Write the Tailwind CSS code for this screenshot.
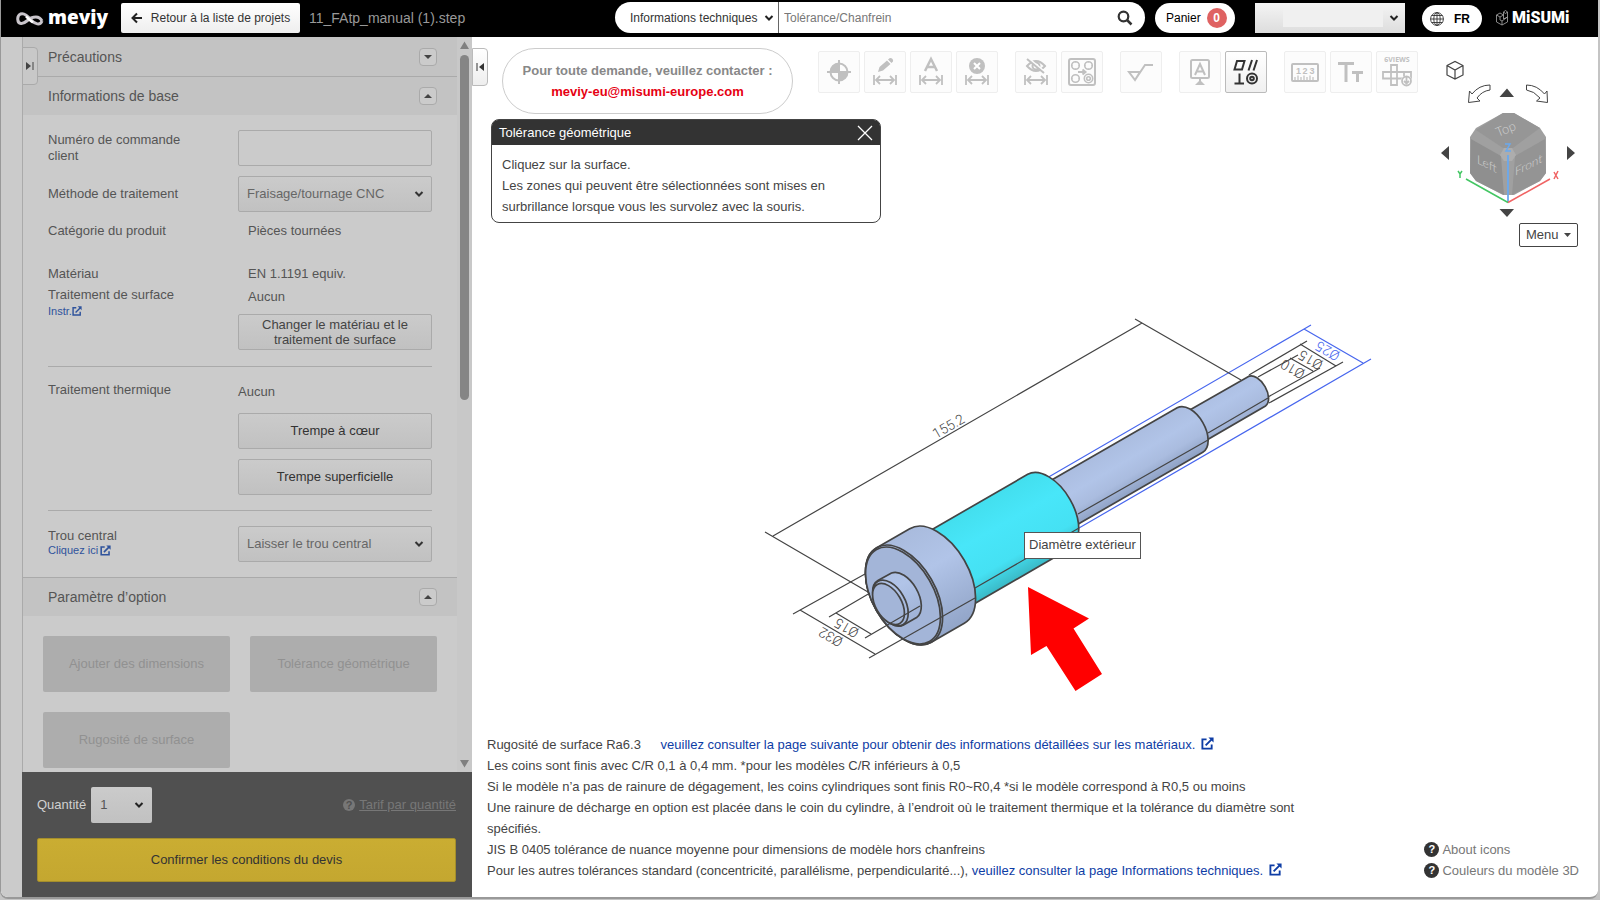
<!DOCTYPE html>
<html lang="fr">
  <head>
    <meta charset="UTF-8" />
    <meta name="viewport" content="width=device-width, initial-scale=1.0" />
    <title>meviy</title>
    <script src="https://cdn.jsdelivr.net/npm/@tailwindcss/browser@4"></script>
  </head>
  <body class="h-screen pb-px bg-[#c4c4c4] font-['Liberation_Sans',Arial,sans-serif] text-[13px] text-[#444]">
    <!-- Shared icons -->
    <svg class="hidden">
      <symbol id="chevron" viewBox="0 0 10 8">
        <path d="M1.5 2 L5 5.5 L8.500 2" fill="none" stroke="currentColor" stroke-width="2" />
      </symbol>
      <symbol id="external" viewBox="0 0 14 14">
        <path d="M6 2.500H1.500V12.500H11.500V8M5 9L12 2" fill="none" stroke="currentColor" stroke-width="2" />
        <path d="M8 0.500H13.500V6Z" fill="currentColor" />
      </symbol>
      <symbol id="width" viewBox="0 0 24 12">
        <path d="M1 1V11M23 1V11M3 6H21M7 2L3 6L7 10M17 2L21 6L17 10" fill="none" stroke="currentColor" stroke-width="1.8" />
      </symbol>
    </svg>

    <div class="flex flex-col h-full mr-0.5 rounded-b-lg overflow-hidden border-l border-b-2 border-[#999] bg-white">
      <!-- Header -->
      <header class="flex items-center h-[37px] shrink-0 bg-black text-xs">
        <a href="#" class="flex items-center gap-1 ml-[15px] w-[105px] text-white">
          <svg class="w-7 h-4" viewBox="0 0 28 16">
            <path d="M26 10C24 15 19 13 15 9C11 4 8 1.500 4.500 3C0.500 5 1 12 5 12.500C9 13 11 9 15 7C20 5 24 6 26 10" fill="none" stroke="#c9c5cb" stroke-width="3" />
            <path d="M10 5.500C12 7 14 9.500 17 11.500" fill="none" stroke="#fff" stroke-width="2.500" />
          </svg>
          <span class="font-['Open_Sans',sans-serif] font-extrabold text-[19px] leading-6 -mt-1">meviy</span>
        </a>
        <button class="flex items-center justify-center gap-2 w-[179px] h-[30px] -mt-0.5 rounded-xs bg-linear-to-b from-white to-[#eee] text-[#333]">
          <svg class="w-3 h-3" viewBox="0 0 12 12"><path d="M11 6H2M6 1.500L1.500 6L6 10.500" fill="none" stroke="#222" stroke-width="2" /></svg>
          Retour à la liste de projets
        </button>
        <span class="ml-[9px] -mt-0.5 text-sm text-[#999]">11_FAtp_manual (1).step</span>

        <div class="flex items-center ml-auto mr-7 h-full pb-0.5">
          <form class="flex items-center w-[530px] h-[31px] rounded-full bg-white overflow-hidden">
            <label class="relative flex items-center w-[164px] h-full border-r border-[#666]">
              <select aria-label="Catégorie" class="appearance-none w-full h-full pl-[15px] text-[#333] outline-none">
                <option>Informations techniques</option>
              </select>
              <svg class="absolute right-1 w-2.5 h-2 text-[#222] pointer-events-none"><use href="#chevron" /></svg>
            </label>
            <input aria-label="Recherche" placeholder="Tolérance/Chanfrein" class="flex-1 pl-[5px] outline-none placeholder:text-[#777]" />
            <button type="button" aria-label="Rechercher" class="mr-3">
              <svg class="w-4 h-4" viewBox="0 0 16 16"><circle cx="6.500" cy="6.500" r="4.800" fill="none" stroke="#333" stroke-width="2.200" /><path d="M10 10L14.500 14.500" stroke="#333" stroke-width="2.500" /></svg>
            </button>
          </form>
          <button class="flex items-center gap-1.5 ml-2.5 w-20 h-[30px] pl-[11px] rounded-full bg-white text-black">
            Panier
            <span class="w-5 h-5 rounded-full bg-[#df6262] font-bold leading-5 text-white text-center">0</span>
          </button>
          <label class="relative flex items-center ml-5 w-[150px] h-[30px]">
            <select aria-label="Compte" class="appearance-none w-full h-full bg-linear-to-b from-[#f4f4f4] to-[#ddd]"><option></option></select>
            <span class="absolute left-7 w-[100px] h-[19px] bg-[#f0f0f0]"></span>
            <svg class="absolute right-1.5 w-2.5 h-2 text-[#222] pointer-events-none"><use href="#chevron" /></svg>
          </label>
          <button class="flex items-center gap-2.5 ml-[17px] mt-0.5 w-[60px] h-[27px] pl-2 rounded-full bg-white text-black font-bold text-xs">
            <svg class="w-3.5 h-3.5" viewBox="0 0 14 14" fill="none" stroke="#333" stroke-width="0.900"><circle cx="7" cy="7" r="6.400" /><ellipse cx="7" cy="7" rx="3.200" ry="6.400" /><path d="M7 0.500V13.500M0.500 7H13.500M1.500 3.500H12.500M1.500 10.500H12.500" /></svg>
            FR
          </button>
          <a href="#" class="flex items-center gap-1 ml-3.5 w-[74px] text-white">
            <svg class="w-3 h-4 shrink-0" viewBox="0 0 12 16" fill="none" stroke="#aaa" stroke-width="0.800"><path d="M0.500 5L4 3L7.500 5V9L11.500 7V12L6 15L0.500 12ZM0.500 5L4 7V10L6 11V15M4 7L7.500 5L7.500 2L9.500 0.500L11.500 2V7M6 11L11.500 7M7.500 2L9.500 3.500L11.500 2" /></svg>
            <span class="font-[Roboto,sans-serif] font-black text-base leading-5">MiSUMi</span>
          </a>
        </div>
      </header>

      <div class="flex flex-1 min-h-0">
        <!-- Sidebar -->
        <aside class="flex flex-col w-[450px] ml-[21px] shrink-0 relative before:absolute before:-left-[21px] before:w-[21px] before:h-full before:bg-[#cbcbcb] text-[#555]">
          <button aria-label="Ouvrir" class="absolute left-0 top-2.5 z-10 flex items-center justify-center w-4 h-[38px] rounded-r-sm border border-[#aaa] bg-[#c8c8c8]">
            <svg class="w-2 h-2" viewBox="0 0 8 8"><path d="M0 0L5 4L0 8Z" fill="#444" /><path d="M7 0V8" stroke="#444" /></svg>
          </button>
          <div class="flex flex-1 min-h-0 bg-[#cbcbcb]">
            <div class="flex-1 overflow-hidden border-l border-[#aaa]">
              <h2 class="flex items-center justify-between h-10 pl-[25px] pr-5 border-b border-[#aaa] bg-[#c3c3c3] text-sm">
                Précautions
                <button aria-label="Déplier" class="flex items-center justify-center w-[18px] h-[18px] rounded-sm border border-[#aaa] bg-[#cbcbcb]"><svg class="w-2 h-1" viewBox="0 0 8 4"><path d="M0 0H8L4 4Z" fill="#444" /></svg></button>
              </h2>
              <h2 class="flex items-center justify-between h-[38px] pl-[25px] pr-5 bg-[#c3c3c3] text-sm">
                Informations de base
                <button aria-label="Replier" class="flex items-center justify-center w-[18px] h-[18px] rounded-sm border border-[#aaa] bg-[#cbcbcb]"><svg class="w-2 h-1" viewBox="0 0 8 4"><path d="M0 4H8L4 0Z" fill="#444" /></svg></button>
              </h2>

              <div class="mx-[25px]">
                <div class="grid grid-cols-[1fr_194px] pt-[15px] gap-y-2.5 items-center">
                  <label for="order-number" class="leading-4 pr-10">Numéro de commande client</label>
                  <input id="order-number" class="h-9 rounded-xs border border-[#aaa] bg-[#cbcbcb]" />
                  <label for="method">Méthode de traitement</label>
                  <div class="relative flex items-center h-9">
                    <select id="method" class="appearance-none w-full h-full pl-2 rounded-xs border border-[#aaa] bg-linear-to-b from-[#cbcbcb] to-[#c1c1c1] text-[#666]"><option>Fraisage/tournage CNC</option></select>
                    <svg class="absolute right-2 w-2.5 h-2 text-[#333] pointer-events-none"><use href="#chevron" /></svg>
                  </div>
                </div>
                <dl class="grid grid-cols-[1fr_184px] leading-5 pt-[9px]">
                  <dt>Catégorie du produit</dt>
                  <dd>Pièces tournées</dd>
                  <dt class="mt-[23px]">Matériau</dt>
                  <dd class="mt-[23px]">EN 1.1191 equiv.</dd>
                </dl>
                <div class="grid grid-cols-[1fr_194px] leading-5 pb-4 pt-px border-b border-[#aaa]">
                  <div>
                    <p>Traitement de surface</p>
                    <a href="#" class="flex items-center text-[11px] leading-3 text-[#2f539c]">Instr.<svg class="w-2.5 h-2.5"><use href="#external" /></svg></a>
                  </div>
                  <div>
                    <p class="pl-2.5 pt-0.5">Aucun</p>
                    <button class="mt-[7px] w-full h-9 rounded-xs border border-[#aaa] bg-linear-to-b from-[#cbcbcb] to-[#c1c1c1] leading-[15px] text-[#444]">Changer le matériau et le<br />traitement de surface</button>
                  </div>
                </div>
                <div class="grid grid-cols-[1fr_194px] leading-5 pt-[13px] pb-[15px] border-b border-[#aaa]">
                  <p>Traitement thermique</p>
                  <div class="flex flex-col gap-2.5">
                    <p class="pt-0.5 pb-px">Aucun</p>
                    <button class="h-9 rounded-xs border border-[#aaa] bg-linear-to-b from-[#cbcbcb] to-[#c1c1c1] text-[#333]">Trempe à cœur</button>
                    <button class="h-9 rounded-xs border border-[#aaa] bg-linear-to-b from-[#cbcbcb] to-[#c1c1c1] text-[#333]">Trempe superficielle</button>
                  </div>
                </div>
                <div class="grid grid-cols-[1fr_194px] py-[15px]">
                  <div class="leading-4 pt-0.5">
                    <label for="center-hole">Trou central</label>
                    <a href="#" class="flex items-center gap-0.5 text-[11px] leading-3 text-[#2f539c]">Cliquez ici<svg class="w-[11px] h-[11px]"><use href="#external" /></svg></a>
                  </div>
                  <div class="relative flex items-center h-9">
                    <select id="center-hole" class="appearance-none w-full h-full pl-2 rounded-xs border border-[#aaa] bg-linear-to-b from-[#cbcbcb] to-[#c1c1c1] text-[#666]"><option>Laisser le trou central</option></select>
                    <svg class="absolute right-2 w-2.5 h-2 text-[#333] pointer-events-none"><use href="#chevron" /></svg>
                  </div>
                </div>
              </div>

              <h2 class="flex items-center justify-between h-[39px] pl-[25px] pr-5 border-t border-[#aaa] bg-[#c3c3c3] text-sm">
                Paramètre d’option
                <button aria-label="Replier" class="flex items-center justify-center w-[18px] h-[18px] rounded-sm border border-[#aaa] bg-[#cbcbcb]"><svg class="w-2 h-1" viewBox="0 0 8 4"><path d="M0 4H8L4 0Z" fill="#444" /></svg></button>
              </h2>
              <div class="grid grid-cols-2 gap-5 px-5 pt-5">
                <button disabled class="h-14 rounded-xs bg-[#adadad] text-[#919191]">Ajouter des dimensions</button>
                <button disabled class="h-14 rounded-xs bg-[#adadad] text-[#919191]">Tolérance géométrique</button>
                <button disabled class="h-14 rounded-xs bg-[#adadad] text-[#919191]">Rugosité de surface</button>
              </div>
            </div>
            <!-- Scrollbar -->
            <div class="flex flex-col items-center w-[15px] py-1 bg-[#c8c8c8]">
              <svg class="w-[9px] h-2 shrink-0" viewBox="0 0 9 8"><path d="M4.500 0.500L9 8H0Z" fill="#808080" /></svg>
              <div class="mt-1.5 w-[9px] h-[345px] rounded-full bg-[#858585]"></div>
              <svg class="mt-auto w-[9px] h-2 shrink-0" viewBox="0 0 9 8"><path d="M4.500 7.500L9 0H0Z" fill="#808080" /></svg>
            </div>
          </div>
          <div class="h-[125px] pl-[15px] pr-4 pt-[15px] bg-[#505050]">
            <div class="flex items-center">
              <label for="quantity" class="text-[#d0d0d0]">Quantité</label>
              <div class="relative flex items-center ml-[5px] w-[61px] h-9">
                <select id="quantity" class="appearance-none w-full h-full pl-[9px] rounded-xs bg-linear-to-b from-[#cbcbcb] to-[#c1c1c1] text-[#555]"><option>1</option></select>
                <svg class="absolute right-2 w-2.5 h-2 text-[#222] pointer-events-none"><use href="#chevron" /></svg>
              </div>
              <a href="#" class="flex items-center gap-1 ml-auto text-[#777]">
                <span class="w-3 h-3 rounded-full bg-[#777] text-[11px] leading-3 font-bold text-[#505050] text-center">?</span>
                <span class="underline">Tarif par quantité</span>
              </a>
            </div>
            <button class="mt-[15px] w-full h-11 rounded-xs border border-[#a48e2c] bg-linear-to-b from-[#caad32] to-[#c4a730] text-[#333]">Confirmer les conditions du devis</button>
          </div>
        </aside>

        <!-- Viewer -->
        <main class="relative flex flex-col flex-1 pt-2.5">
          <!-- 3D model -->
          <svg class="absolute inset-0 w-full h-full pointer-events-none" viewBox="472 37 1126 860" fill="none" stroke="#444" stroke-width="1.200">
            <defs>
              <linearGradient id="steel-head" gradientUnits="userSpaceOnUse" x1="890" y1="540" x2="945" y2="635">
                <stop offset="0" stop-color="#a9bbdd" /><stop offset="0.400" stop-color="#b1c4e8" /><stop offset="1" stop-color="#92a5c8" />
              </linearGradient>
              <linearGradient id="steel-shaft" gradientUnits="userSpaceOnUse" x1="1106" y1="449" x2="1132" y2="493">
                <stop offset="0" stop-color="#abbde0" /><stop offset="0.400" stop-color="#b1c4e8" /><stop offset="0.700" stop-color="#aabcdf" /><stop offset="1" stop-color="#8fa2c5" />
              </linearGradient>
              <linearGradient id="selected" gradientUnits="userSpaceOnUse" x1="972" y1="507" x2="1014" y2="581">
                <stop offset="0" stop-color="#43dfee" /><stop offset="0.350" stop-color="#48e6f9" /><stop offset="0.750" stop-color="#45e1f3" /><stop offset="1" stop-color="#3ab9c6" />
              </linearGradient>
            </defs>
            <!-- Diameter 25, selected -->
            <path stroke="#4766ee" d="M1040 482L1311 325M1079 528L1371 359M1304 329L1363 363" />
            <!-- Length -->
            <path d="M773 536L1142 323M765 532L868 592M1135 319L1241 380" />
            <!-- Stepped shaft -->
            <g stroke-width="1.700">
              <path fill="url(#steel-shaft)" d="M1181 415L1248.500 376.400A17.100 9.900 60 0 1 1265.500 406L1198.600 444.800Z" />
              <path fill="url(#steel-shaft)" d="M1036 489L1177.200 407.800A25.600 14.800 60 0 1 1202.800 452.200L1061.800 533.500Z" />
              <path fill="url(#selected)" d="M915.700 539L1027.700 474.300A42.700 24.600 60 0 1 1070.300 548.300L958.300 613Z" />
              <path fill="url(#steel-head)" d="M876.700 547.700L909.700 528.700A54.600 31.500 60 0 1 964.300 623.300L931.300 642.300A54.600 31.500 60 0 1 876.700 547.700Z" />
              <ellipse cx="904" cy="595" rx="54.600" ry="31.500" transform="rotate(60 904 595)" />
              <ellipse cx="903" cy="595.500" rx="53" ry="30.500" transform="rotate(60 903 595.500)" fill="#a3b5d8" />
              <path fill="url(#steel-head)" d="M877.900 580.500L891.500 573A25.600 14.800 60 0 1 917 617.200L903.500 624.900A25.600 14.800 60 0 1 877.900 580.500Z" />
              <ellipse cx="890.500" cy="603" rx="25" ry="14.500" transform="rotate(60 890.500 603)" />
              <ellipse cx="888.500" cy="604" rx="22.500" ry="13" transform="rotate(60 888.500 604)" fill="#a3b5d8" />
            </g>
            <path d="M975 588L1079 528M1078 514L1208 440M1208 433L1268 398" />
            <path d="M1249 375L1307 341M1269 403L1343 362M1300 344L1336 366M1258 377L1298 355M1268 397L1320 368M1290 358L1313 371" />
            <path d="M793 614L865 574M869 658L975 598M800 610L875 654M829 617L870 593M865 638L920 606M836 613L871 634" />
            <g stroke="none" fill="#444" font-size="14" font-family="Roboto, sans-serif" font-weight="300">
              <text transform="translate(936 439) rotate(-30)">155.2</text>
              <text transform="translate(1341 353) rotate(210)" fill="#4766ee">Ø25</text>
              <text transform="translate(1324 362) rotate(210)">Ø15</text>
              <text transform="translate(1306 371) rotate(210)">Ø10</text>
              <text transform="translate(860 630) rotate(210)">Ø15</text>
              <text transform="translate(844 639) rotate(210)">Ø32</text>
            </g>
            <path stroke="none" fill="#f00" d="M1028 587L1089 618.500L1073.500 628.500L1102 674L1075.500 691L1046.500 646L1031 655Z" />
          </svg>
          <div class="absolute left-[552px] top-[495px] px-1 h-[27px] border border-[#555] bg-white leading-6">Diamètre extérieur</div>

          <div class="relative flex">
            <div class="flex-1 flex flex-col gap-[5px]">
              <div class="flex items-start">
                <button aria-label="Fermer le panneau" class="mt-px flex items-center justify-center w-4 h-[38px] rounded-r-sm border border-[#bbb] bg-linear-to-b from-white to-[#eee]">
                  <svg class="w-2 h-2" viewBox="0 0 8 8"><path d="M8 0L3 4L8 8Z" fill="#333" /><path d="M1 0V8" stroke="#333" /></svg>
                </button>
                <div class="mt-px ml-3.5 w-[291px] h-[66px] pt-[11px] rounded-full border border-[#ccc] bg-white text-center font-bold leading-[21px] text-[#888]">
                  Pour toute demande, veuillez contacter :
                  <a href="#" class="block text-[#e60012]">meviy-eu@misumi-europe.com</a>
                </div>
                <!-- Toolbar -->
                <div class="flex gap-[17px] ml-[25px] mt-1 text-[#c0c0c0]">
                  <div class="flex gap-1">
                    <button aria-label="Origine" class="w-[42px] h-[42px] rounded-xs border border-[#eee] bg-[#fcfcfc]">
                      <svg viewBox="0 0 40 40"><circle cx="20" cy="20" r="8.500" fill="none" stroke="currentColor" stroke-width="2" /><path d="M20 8V32M8 20H32" stroke="currentColor" stroke-width="2" /><path d="M20 20V11A9 9 0 0 0 11 20ZM20 20V29A9 9 0 0 0 29 20Z" fill="currentColor" /></svg>
                    </button>
                    <button aria-label="Modifier la cote" class="w-[42px] h-[42px] rounded-xs border border-[#eee] bg-[#fcfcfc]">
                      <svg viewBox="0 0 40 40"><path d="M13 20L14.500 15L22 8.500L25.500 12L18 18.500ZM23 7.500L24.500 6.300A2.600 2.600 0 0 1 28 9.500L26.500 11Z" fill="currentColor" /><use href="#width" x="8" y="22" width="24" height="12" /></svg>
                    </button>
                    <button aria-label="Texte de cote" class="w-[42px] h-[42px] rounded-xs border border-[#eee] bg-[#fcfcfc]">
                      <svg viewBox="0 0 40 40"><path d="M14 19L20 7L26 19M16 15H24" fill="none" stroke="currentColor" stroke-width="2.500" /><use href="#width" x="8" y="22" width="24" height="12" /></svg>
                    </button>
                    <button aria-label="Supprimer la cote" class="w-[42px] h-[42px] rounded-xs border border-[#eee] bg-[#fcfcfc]">
                      <svg viewBox="0 0 40 40"><circle cx="20" cy="14" r="8" fill="currentColor" /><path d="M17 11L23 17M23 11L17 17" stroke="#fff" stroke-width="2" /><use href="#width" x="8" y="22" width="24" height="12" /></svg>
                    </button>
                  </div>
                  <div class="flex gap-1">
                    <button aria-label="Masquer les cotes" class="w-[42px] h-[42px] rounded-xs border border-[#eee] bg-[#fcfcfc]">
                      <svg viewBox="0 0 40 40" fill="none" stroke="currentColor" stroke-width="2"><path d="M11 14Q20 4 29 14Q20 24 11 14Z" /><circle cx="20" cy="14" r="3.500" /><path d="M12 6L29 20" stroke="#fcfcfc" /><path d="M11 7L28 21" /><use href="#width" x="8" y="22" width="24" height="12" /></svg>
                    </button>
                    <button aria-label="Copier les trous" class="w-[42px] h-[42px] rounded-xs border border-[#eee] bg-[#fcfcfc]">
                      <svg viewBox="0 0 40 40" fill="none" stroke="currentColor" stroke-width="1.600"><rect x="7" y="7" width="26" height="26" rx="2" stroke-width="2" /><circle cx="13.500" cy="13.500" r="3.800" /><circle cx="26.500" cy="13.500" r="3.800" /><circle cx="13.500" cy="26.500" r="3.800" /><circle cx="26.500" cy="26.500" r="4.200" /><circle cx="26.500" cy="26.500" r="1.800" /><path d="M16 20H23M20.500 17.500L23.500 20L20.500 22.500" stroke-width="2" /><path d="M9 13.500H10.500M16.500 13.500H18M22 13.500H23.500M29.500 13.500H31M9 26.500H10.500M16.500 26.500H18M13.500 9V10.500M13.500 16.500V18M26.500 9V10.500M26.500 16.500V18" stroke-width="1" /></svg>
                    </button>
                  </div>
                  <button aria-label="Rugosité" class="w-[42px] h-[42px] rounded-xs border border-[#eee] bg-[#fcfcfc]">
                    <svg viewBox="0 0 40 40" fill="none" stroke="currentColor" stroke-width="2"><path d="M8 20H19L14 28ZM14 28L24 13H32" /></svg>
                  </button>
                  <div class="flex gap-1">
                    <button aria-label="Référence" class="w-[42px] h-[42px] rounded-xs border border-[#eee] bg-[#fcfcfc]">
                      <svg viewBox="0 0 40 40" fill="none" stroke="currentColor" stroke-width="2"><rect x="11" y="8" width="18" height="18" rx="1.500" /><path d="M15 23L20 12L25 23M16.500 19.500H23.500M20 26V29" /><path d="M20 28L25 33H15Z" fill="currentColor" stroke="none" /></svg>
                    </button>
                    <button aria-label="Tolérance géométrique" class="w-[42px] h-[42px] rounded-xs border border-[#bbb] bg-linear-to-b from-white to-[#f0f0f0] text-[#333]">
                      <svg viewBox="0 0 40 40" fill="none" stroke="currentColor" stroke-width="2"><path d="M11 9H18.500L16 17.500H8.500ZM22.500 18.500L26 8M27.500 18.500L31 8M8.500 31.500H18M13.500 31.500V21.500" /><circle cx="26" cy="26.500" r="5" /><circle cx="26" cy="26.500" r="1.800" /></svg>
                    </button>
                  </div>
                  <div class="flex gap-1">
                    <button aria-label="Mesure" class="w-[42px] h-[42px] rounded-xs border border-[#eee] bg-[#fcfcfc]">
                      <svg viewBox="0 0 40 40" fill="none" stroke="currentColor" stroke-width="2"><rect x="7" y="12" width="26" height="17" rx="1" /><path d="M10 28V25M13 28V23.500M16 28V25M19 28V23.500M22 28V25M25 28V23.500M28 28V25" stroke-width="1.200" /><text font-size="9" font-weight="bold" fill="currentColor" stroke="none" font-family="Liberation Sans, sans-serif"><tspan x="11" y="22">1</tspan><tspan x="17.500" y="22">2</tspan><tspan x="24.500" y="22">3</tspan></text></svg>
                    </button>
                    <button aria-label="Taille du texte" class="w-[42px] h-[42px] rounded-xs border border-[#eee] bg-[#fcfcfc]">
                      <svg viewBox="0 0 40 40" fill="none" stroke="currentColor" stroke-width="3"><path d="M7 11.500H23M15 11.500V30M21 20.500H32M26.500 20.500V30" /></svg>
                    </button>
                    <button aria-label="6 vues" class="w-[42px] h-[42px] rounded-xs border border-[#eee] bg-[#fcfcfc]">
                      <svg viewBox="0 0 40 40" fill="none" stroke="currentColor" stroke-width="1.800"><text x="20" y="10" text-anchor="middle" font-size="7" font-weight="bold" fill="currentColor" stroke="none" font-family="Open Sans, sans-serif">6VIEWS</text><path d="M14 13H20V33H14ZM6 20H34V26.500H6ZM27 20V26" /><circle cx="29.500" cy="29" r="5.500" fill="#fcfcfc" stroke="none" /><circle cx="29.500" cy="29" r="4.500" fill="#fcfcfc" /><path d="M29.500 24V31M27 29L29.500 31.500L32 29" /></svg>
                    </button>
                  </div>
                </div>
              </div>

              <section class="ml-[19px] w-[390px] rounded-lg border border-[#444] bg-white">
                <h3 class="flex items-center justify-between h-[25px] pl-[7px] pr-[7px] rounded-t-md bg-[#333] text-white">
                  Tolérance géométrique
                  <button aria-label="Fermer"><svg class="w-4 h-4" viewBox="0 0 16 16"><path d="M1 1L15 15M15 1L1 15" stroke="#fff" stroke-width="1.300" /></svg></button>
                </h3>
                <p class="px-2.5 pt-[9px] pb-[5px] leading-[21px]">Cliquez sur la surface.<br />Les zones qui peuvent être sélectionnées sont mises en surbrillance lorsque vous les survolez avec la souris.</p>
              </section>
            </div>

            <!-- View cube -->
            <div class="flex flex-col items-end mr-5 pt-2">
              <svg class="w-[140px] h-[164px]" viewBox="1438 55 140 164" fill="none" stroke="#444">
                <path d="M1447 65.500L1455 61.500L1463 65.500V75L1455 79L1447 75ZM1447 65.500L1455 70L1463 65.500M1455 70V79" stroke-width="1.200" />
                <path d="M1490 85V90Q1482 91 1477 98L1480 101L1468.500 102.500L1469.500 91L1472 94Q1479 85 1490 85Z" />
                <path d="M1526.500 85V90Q1534 91 1540 98L1536.500 101L1547.500 102.500L1547 91L1544.500 94Q1537 85 1526.500 85Z" />
                <path d="M1507 88.500L1514 97H1499.500ZM1507 217L1514 209H1499.500ZM1441 153L1449 146V160ZM1575 153L1567 146V160Z" fill="#444" stroke="none" />
                <g stroke="none">
                  <path d="M1503 113H1514L1540 128L1546 137V173L1540 181L1514 195H1503L1476 181L1470 173V137L1476 128Z" fill="#a0a0a0" />
                  <path d="M1503 113H1514L1540 128L1513 148H1503L1476 130Z" fill="#969696" />
                  <path d="M1471 139L1501 156L1504 195L1476 181L1470 173Z" fill="#8f8f8f" />
                  <path d="M1545 139L1515 156L1512 195L1540 181L1546 173Z" fill="#949494" />
                  <path d="M1500 155L1504 148H1512L1516 155L1512 161H1504Z" fill="#adadad" />
                </g>
                <g stroke="none" fill="#d0d0d0" font-size="13" font-family="Lato, sans-serif" font-weight="300">
                  <text transform="translate(1498 137) rotate(-22)">Top</text>
                  <text transform="translate(1477 163) skewY(27)" font-size="12">Left</text>
                  <text transform="translate(1515 176) skewY(-27)" font-size="12">Front</text>
                </g>
                <path d="M1508 155V202" stroke="#6aa9ee" stroke-width="1.800" />
                <path d="M1505 144H1510L1506 151H1511" stroke="#6aa9ee" stroke-width="1.500" />
                <path d="M1508 202.500L1466 179M1458 171L1460 174L1462 171M1460 174V178" stroke="#43c663" stroke-width="1.500" />
                <path d="M1508 202.500L1550 179M1554 172L1558 179M1558 171L1554 179" stroke="#f06464" stroke-width="1.500" />
              </svg>
              <button class="flex items-center justify-between mt-1 w-[59px] h-6 px-1.5 rounded-xs border border-[#444] bg-white">
                Menu
                <svg class="w-[7px] h-1" viewBox="0 0 7 4"><path d="M0 0H7L3.500 4Z" fill="#444" /></svg>
              </button>
            </div>
          </div>

          <!-- Notes -->
          <div class="relative flex justify-between items-end mt-auto ml-[15px] mr-[19px] mb-4 leading-[21px]">
            <div class="w-[820px]">
              <p>Rugosité de surface Ra6.3 <a href="#" class="ml-4 text-[#0e3da5]">veuillez consulter la page suivante pour obtenir des informations détaillées sur les matériaux. <svg class="inline w-[13px] h-[13px] ml-0.5 -mt-1"><use href="#external" /></svg></a></p>
              <p>Les coins sont finis avec C/R 0,1 à 0,4 mm. *pour les modèles C/R inférieurs à 0,5</p>
              <p>Si le modèle n’a pas de rainure de dégagement, les coins cylindriques sont finis R0~R0,4 *si le modèle correspond à R0,5 ou moins</p>
              <p>Une rainure de décharge en option est placée dans le coin du cylindre, à l’endroit où le traitement thermique et la tolérance du diamètre sont spécifiés.</p>
              <p>JIS B 0405 tolérance de nuance moyenne pour dimensions de modèle hors chanfreins</p>
              <p>Pour les autres tolérances standard (concentricité, parallélisme, perpendicularité...), <a href="#" class="text-[#0e3da5]">veuillez consulter la page Informations techniques. <svg class="inline w-[13px] h-[13px] ml-0.5 -mt-1"><use href="#external" /></svg></a></p>
            </div>
            <div class="text-[#777]">
              <a href="#" class="flex items-center gap-[3px]"><span class="w-[15px] h-[15px] rounded-full bg-[#333] text-[11px] leading-[15px] font-bold text-white text-center">?</span>About icons</a>
              <a href="#" class="flex items-center gap-[3px]"><span class="w-[15px] h-[15px] rounded-full bg-[#333] text-[11px] leading-[15px] font-bold text-white text-center">?</span>Couleurs du modèle 3D</a>
            </div>
          </div>
        </main>
      </div>
    </div>
  </body>
</html>
